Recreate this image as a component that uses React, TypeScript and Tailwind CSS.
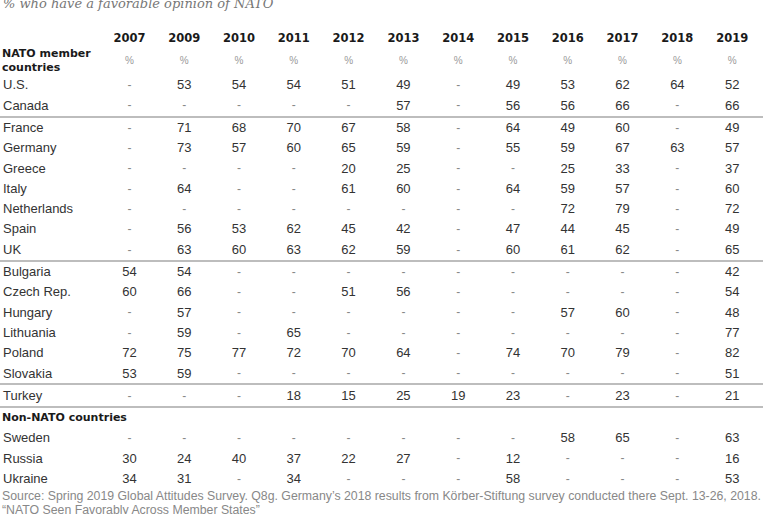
const years = ["2007", "2009", "2010", "2011", "2012", "2013", "2014", "2015", "2016", "2017", "2018", "2019"];

type Row = { name: string; vals: string[]; line?: boolean };

const nato: Row[] = [
  { name: "U.S.", vals: ["-", "53", "54", "54", "51", "49", "-", "49", "53", "62", "64", "52"] },
  { name: "Canada", vals: ["-", "-", "-", "-", "-", "57", "-", "56", "56", "66", "-", "66"], line: true },
  { name: "France", vals: ["-", "71", "68", "70", "67", "58", "-", "64", "49", "60", "-", "49"] },
  { name: "Germany", vals: ["-", "73", "57", "60", "65", "59", "-", "55", "59", "67", "63", "57"] },
  { name: "Greece", vals: ["-", "-", "-", "-", "20", "25", "-", "-", "25", "33", "-", "37"] },
  { name: "Italy", vals: ["-", "64", "-", "-", "61", "60", "-", "64", "59", "57", "-", "60"] },
  { name: "Netherlands", vals: ["-", "-", "-", "-", "-", "-", "-", "-", "72", "79", "-", "72"] },
  { name: "Spain", vals: ["-", "56", "53", "62", "45", "42", "-", "47", "44", "45", "-", "49"] },
  { name: "UK", vals: ["-", "63", "60", "63", "62", "59", "-", "60", "61", "62", "-", "65"], line: true },
  { name: "Bulgaria", vals: ["54", "54", "-", "-", "-", "-", "-", "-", "-", "-", "-", "42"] },
  { name: "Czech Rep.", vals: ["60", "66", "-", "-", "51", "56", "-", "-", "-", "-", "-", "54"] },
  { name: "Hungary", vals: ["-", "57", "-", "-", "-", "-", "-", "-", "57", "60", "-", "48"] },
  { name: "Lithuania", vals: ["-", "59", "-", "65", "-", "-", "-", "-", "-", "-", "-", "77"] },
  { name: "Poland", vals: ["72", "75", "77", "72", "70", "64", "-", "74", "70", "79", "-", "82"] },
  { name: "Slovakia", vals: ["53", "59", "-", "-", "-", "-", "-", "-", "-", "-", "-", "51"], line: true },
  { name: "Turkey", vals: ["-", "-", "-", "18", "15", "25", "19", "23", "-", "23", "-", "21"], line: true },
];

const nonNato: Row[] = [
  { name: "Sweden", vals: ["-", "-", "-", "-", "-", "-", "-", "-", "58", "65", "-", "63"] },
  { name: "Russia", vals: ["30", "24", "40", "37", "22", "27", "-", "12", "-", "-", "-", "16"] },
  { name: "Ukraine", vals: ["34", "31", "-", "34", "-", "-", "-", "58", "-", "-", "-", "53"] },
];

const grid = "grid grid-cols-[102px_repeat(12,54.8px)]";

function DataRow({ row }: { row: Row }) {
  return (
    <>
      <div className={`${grid} h-[20.3px] items-center`}>
        <div className="pl-[3px] text-[13px] text-[#333]">{row.name}</div>
        {row.vals.map((v, i) =>
          v === "-" ? (
            <div key={i} className="text-center text-[12px] text-[#888]">-</div>
          ) : (
            <div key={i} className="text-center text-[13px] text-[#333]">{v}</div>
          )
        )}
      </div>
      {row.line && <div className="h-[2px] w-[763px] bg-[#bdbdbd]" />}
    </>
  );
}

export default function App() {
  return (
    <div className="w-[768px] h-[514px] overflow-hidden bg-white font-['Liberation_Sans',Arial,sans-serif]">
      <div className="mt-[-4px] pl-[3px] font-['DejaVu_Serif',Georgia,serif] italic text-[13px] leading-[16px] text-[#777]">
        % who have a favorable opinion of NATO
      </div>

      <div className={`${grid} mt-[18px] h-[16px] items-center`}>
        <div />
        {years.map((y) => (
          <div key={y} className="text-center font-['DejaVu_Sans',sans-serif] font-bold text-[11.5px] text-[#1a1a1a]">
            {y}
          </div>
        ))}
      </div>

      <div className={`${grid} h-[29px] items-center`}>
        <div className="pl-[2px] font-['DejaVu_Sans',sans-serif] font-bold text-[11px] leading-[14px] text-[#1a1a1a]">
          NATO member
          <br />
          countries
        </div>
        {years.map((y) => (
          <div key={y} className="text-center text-[10px] text-[#999]">%</div>
        ))}
      </div>

      {nato.map((r) => (
        <DataRow key={r.name} row={r} />
      ))}

      <div className="h-[20.3px] flex items-center pl-[2px] font-['DejaVu_Sans',sans-serif] font-bold text-[11px] text-[#1a1a1a]">
        Non-NATO countries
      </div>

      {nonNato.map((r) => (
        <DataRow key={r.name} row={r} />
      ))}

      <div className="pl-[2px] text-[12.3px] leading-[14.5px] text-[#888] whitespace-nowrap">
        Source: Spring 2019 Global Attitudes Survey. Q8g. Germany’s 2018 results from Körber-Stiftung survey conducted there Sept. 13-26, 2018.
        <br />
        “NATO Seen Favorably Across Member States”
      </div>
    </div>
  );
}
